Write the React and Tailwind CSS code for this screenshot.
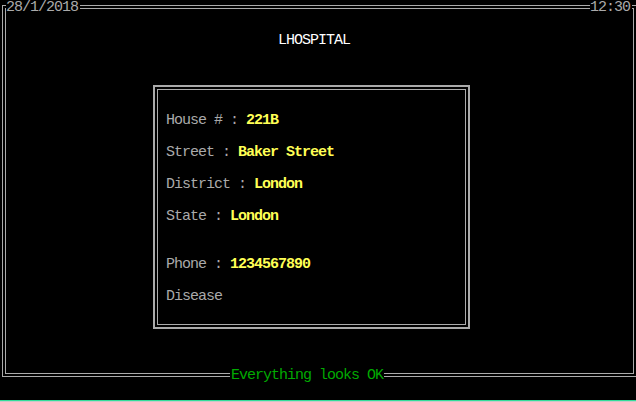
const MONO = "font-['Liberation_Mono','DejaVu_Sans_Mono',monospace]";

function Field({ label, value, className = '' }) {
  return (
    <div className={`h-4 whitespace-pre ${className}`}>
      <span className="text-[#aaaaaa]">{label}</span>
      {value && <span className="text-[#ffff55] font-bold">{value}</span>}
    </div>
  );
}

export default function App() {
  return (
    <div className={`w-[636px] h-[402px] bg-black overflow-hidden ${MONO} text-[15px] leading-4 tracking-[-1px]`}>
      <div className="relative w-[640px] h-[400px] pt-[5px] pl-[2px]">
        {/* outer double frame */}
        <div className="w-[635px] h-[372px] border border-[#aaaaaa] p-[2px]">
          <div className="h-full border border-[#aaaaaa] flex flex-col">
            <div className="mt-[24px] pl-[272px] h-4 text-white whitespace-pre">LHOSPITAL</div>

            {/* address card */}
            <div className="mt-[36px] ml-[147px] w-[317px] h-[244px] border-2 border-[#aaaaaa] p-[2px]">
              <div className="h-full border border-[#aaaaaa] pl-[8px] pt-[23px] flex flex-col">
                <Field label="House # : " value="221B" />
                <Field label="Street : " value="Baker Street" className="mt-4" />
                <Field label="District : " value="London" className="mt-4" />
                <Field label="State : " value="London" className="mt-4" />
                <Field label="Phone : " value="1234567890" className="mt-8" />
                <Field label="Disease" className="mt-4" />
              </div>
            </div>
          </div>
        </div>

        {/* text sitting on the frame lines */}
        <div className="absolute left-[6px] top-0 h-4 pr-[2px] bg-black text-[#aaaaaa] whitespace-pre">28/1/2018</div>
        <div className="absolute left-[590px] top-0 h-4 pr-[2px] bg-black text-[#aaaaaa] whitespace-pre">12:30</div>
        <div className="absolute left-[230px] top-[368px] h-4 w-[154px] pl-[1px] bg-black text-[#00aa00] whitespace-pre">Everything looks OK</div>
      </div>
      <div className="h-px bg-[#33dd99]" />
      <div className="h-px bg-[#c8c8c8]" />
    </div>
  );
}
